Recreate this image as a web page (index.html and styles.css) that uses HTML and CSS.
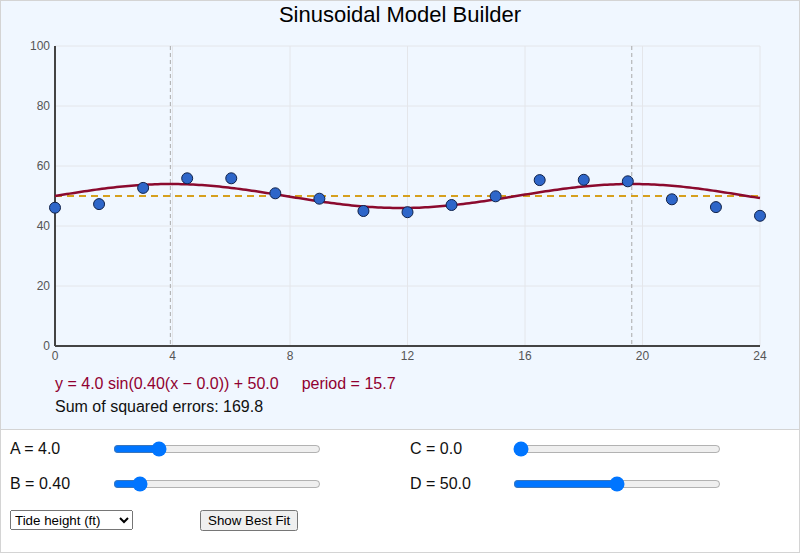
FILE: index.html
```html
<!DOCTYPE html>
<html lang="en">
<head>
  <meta charset="UTF-8" />
  <meta name="viewport" content="width=device-width, initial-scale=1.0" />
  <title>Sinusoidal Model Builder</title>
  <link rel="stylesheet" href="styles.css">
</head>
<body>
  <div class="chart-panel">
    <h1>Sinusoidal Model Builder</h1>
    <svg id="chart" width="798" height="340" viewBox="1 26 798 340"></svg>
    <div class="readout">
      <div class="equation">
        <span id="equation">y = 4.0 sin(0.40(x − 0.0)) + 50.0</span><span id="period" class="period">period = 15.7</span>
      </div>
      <div id="sse">Sum of squared errors: 169.8</div>
    </div>
  </div>

  <div class="controls">
    <div class="param">
      <label for="A" id="labelA">A = 4.0</label>
      <input type="range" id="A" min="0" max="20" step="0.1" value="4">
    </div>
    <div class="param">
      <label for="C" id="labelC">C = 0.0</label>
      <input type="range" id="C" min="0" max="24" step="0.1" value="0">
    </div>
    <div class="param">
      <label for="B" id="labelB">B = 0.40</label>
      <input type="range" id="B" min="0" max="4" step="0.01" value="0.4">
    </div>
    <div class="param">
      <label for="D" id="labelD">D = 50.0</label>
      <input type="range" id="D" min="0" max="100" step="0.1" value="50">
    </div>
    <div class="actions">
      <select id="dataset">
        <option value="tide">Tide height (ft)</option>
      </select>
      <button id="bestFit">Show Best Fit</button>
    </div>
  </div>

  <script>
    const datasets = {
      tide: {
        points: [
          [0, 46.1], [1.5, 47.3], [3, 52.7], [4.5, 55.9], [6, 55.9], [7.5, 50.9],
          [9, 49.1], [10.5, 45.0], [12, 44.6], [13.5, 47.0], [15, 49.9], [16.5, 55.3],
          [18, 55.4], [19.5, 54.9], [21, 48.9], [22.5, 46.3], [24, 43.4]
        ],
        best: { A: 5.2, B: 0.42, C: 0.9, D: 50.0 }
      }
    };

    // plot area in svg units
    const X0 = 55, X1 = 760, Y0 = 346, Y1 = 46;
    const XMAX = 24, YMAX = 100;
    const sx = x => X0 + x / XMAX * (X1 - X0);
    const sy = y => Y0 - y / YMAX * (Y0 - Y1);

    const svg = document.getElementById("chart");
    const NS = "http://www.w3.org/2000/svg";

    function el(tag, attrs, text) {
      const node = document.createElementNS(NS, tag);
      for (const k in attrs) node.setAttribute(k, attrs[k]);
      if (text !== undefined) node.textContent = text;
      svg.appendChild(node);
      return node;
    }

    function params() {
      const get = id => parseFloat(document.getElementById(id).value);
      return { A: get("A"), B: get("B"), C: get("C"), D: get("D") };
    }

    function model(p, x) {
      return p.A * Math.sin(p.B * (x - p.C)) + p.D;
    }

    function draw() {
      const p = params();
      const data = datasets[document.getElementById("dataset").value].points;
      svg.innerHTML = "";

      // grid
      for (let x = 0; x <= XMAX; x += 4) {
        el("line", { x1: sx(x), y1: Y1, x2: sx(x), y2: Y0, class: "grid" });
      }
      for (let y = 0; y <= YMAX; y += 20) {
        el("line", { x1: X0, y1: sy(y), x2: X1, y2: sy(y), class: "grid" });
      }

      // dashed markers at each peak
      if (p.B > 0) {
        const step = 2 * Math.PI / p.B;
        let peak = p.C + Math.PI / 2 / p.B;
        while (peak - step >= 0) peak -= step;
        for (; peak <= XMAX; peak += step) {
          if (peak >= 0) el("line", { x1: sx(peak), y1: Y1, x2: sx(peak), y2: Y0, class: "peak" });
        }
      }

      // axes and tick labels
      el("line", { x1: X0, y1: Y1, x2: X0, y2: Y0, class: "axis" });
      el("line", { x1: X0, y1: Y0, x2: X1, y2: Y0, class: "axis" });
      for (let y = 0; y <= YMAX; y += 20) {
        el("text", { x: X0 - 5, y: sy(y) + 4, class: "tick", "text-anchor": "end" }, y);
      }
      for (let x = 0; x <= XMAX; x += 4) {
        el("text", { x: sx(x), y: Y0 + 14, class: "tick", "text-anchor": "middle" }, x);
      }

      // midline
      el("line", { x1: X0, y1: sy(p.D), x2: X1, y2: sy(p.D), class: "midline" });

      // model curve
      let d = "";
      for (let i = 0; i <= 240; i++) {
        const x = i / 240 * XMAX;
        d += (i ? "L" : "M") + sx(x).toFixed(2) + " " + sy(model(p, x)).toFixed(2);
      }
      el("path", { d: d, class: "curve" });

      // data points
      data.forEach(([x, y]) => el("circle", { cx: sx(x), cy: sy(y), r: 5.5, class: "point" }));
    }

    function updateText() {
      const p = params();
      const data = datasets[document.getElementById("dataset").value].points;
      document.getElementById("labelA").textContent = `A = ${p.A.toFixed(1)}`;
      document.getElementById("labelB").textContent = `B = ${p.B.toFixed(2)}`;
      document.getElementById("labelC").textContent = `C = ${p.C.toFixed(1)}`;
      document.getElementById("labelD").textContent = `D = ${p.D.toFixed(1)}`;
      document.getElementById("equation").textContent =
        `y = ${p.A.toFixed(1)} sin(${p.B.toFixed(2)}(x − ${p.C.toFixed(1)})) + ${p.D.toFixed(1)}`;
      document.getElementById("period").textContent =
        "period = " + (p.B > 0 ? (2 * Math.PI / p.B).toFixed(1) : "∞");
      const sse = data.reduce((s, [x, y]) => s + (y - model(p, x)) ** 2, 0);
      document.getElementById("sse").textContent = `Sum of squared errors: ${sse.toFixed(1)}`;
    }

    ["A", "B", "C", "D"].forEach(id => {
      document.getElementById(id).addEventListener("input", () => {
        updateText();
        draw();
      });
    });

    document.getElementById("bestFit").addEventListener("click", () => {
      const best = datasets[document.getElementById("dataset").value].best;
      for (const k in best) document.getElementById(k).value = best[k];
      updateText();
      draw();
    });

    draw();
  </script>
</body>
</html>
```

FILE: styles.css
```css
body {
  margin: 0;
  font-family: "Liberation Sans", Arial, sans-serif;
  color: #111;
}

.chart-panel {
  height: 428px;
  background: #f0f7ff;
  border: 1px solid #d4d4d4;
}

h1 {
  margin: 0;
  padding-top: 2px;
  font-size: 22px;
  font-weight: normal;
  line-height: 23px;
  text-align: center;
  color: #000;
}

#chart {
  display: block;
}

.readout {
  margin-top: 6px;
  padding-left: 54px;
  font-size: 16px;
  line-height: 23px;
}

.equation {
  color: #900030;
}

.period {
  margin-left: 23px;
}

/* svg pieces */
.grid {
  stroke: #e4e6ea;
  stroke-width: 1;
}

.peak {
  stroke: #aaa;
  stroke-width: 1;
  stroke-dasharray: 4 3;
}

.axis {
  stroke: #444;
  stroke-width: 2;
}

.tick {
  font-size: 12px;
  fill: #555;
  font-family: "Liberation Sans", Arial, sans-serif;
}

.midline {
  stroke: #d6a01e;
  stroke-width: 2;
  stroke-dasharray: 7 5;
}

.curve {
  fill: none;
  stroke: #8b0a2e;
  stroke-width: 2.5;
}

.point {
  fill: #2e66c9;
  stroke: #10224a;
  stroke-width: 1;
}

/* slider area */
.controls {
  height: 116px;
  padding-top: 6px;
  border: 1px solid #d4d4d4;
  border-top: none;
  display: grid;
  grid-template-columns: 400px 398px;
  grid-auto-rows: 26px;
  row-gap: 9px;
  align-content: start;
}

.param {
  display: flex;
  align-items: center;
  padding-left: 9px;
  font-size: 16px;
}

.param label {
  width: 103px;
  flex-shrink: 0;
}

.param input[type="range"] {
  width: 208px;
  margin: 0;
}

.actions {
  grid-column: 1 / -1;
  display: flex;
  align-items: center;
  padding-left: 9px;
  margin-top: 4px;
  height: 20px;
}

.actions select {
  width: 123px;
  height: 20px;
}

.actions button {
  margin-left: 67px;
  height: 21px;
}
```
